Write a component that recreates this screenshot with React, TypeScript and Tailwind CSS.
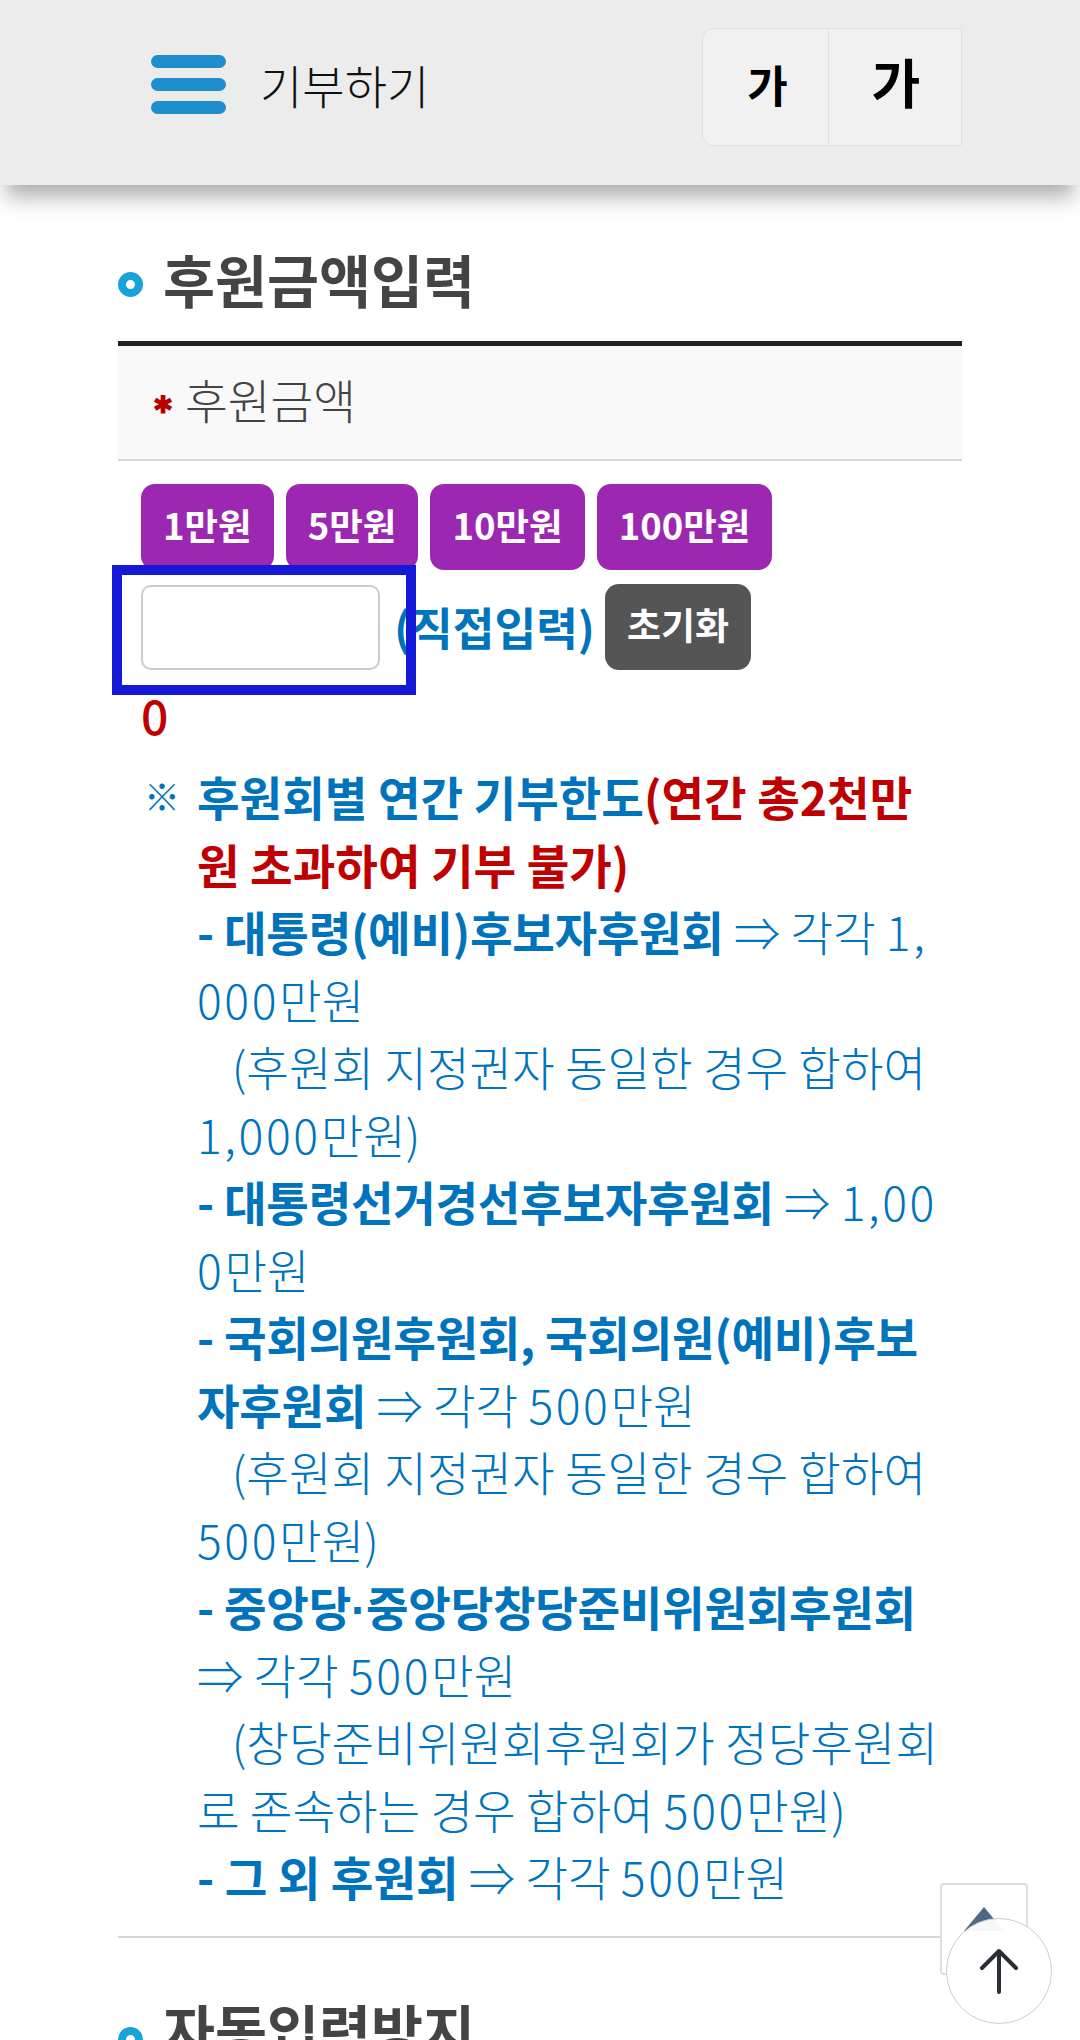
const FONT = "font-['Noto_Sans_CJK_KR','Noto_Sans',sans-serif]";

function Bullet() {
  return <span className="block w-[25px] h-[25px] rounded-full border-[8px] border-[#17a2d8] bg-white shrink-0" />;
}

function Amount({ label }: { label: string }) {
  return (
    <button className="h-[86px] rounded-[14px] bg-[#9c27b0] px-[22px] pb-[4px] text-[36.5px] font-bold text-white">
      {label}
    </button>
  );
}

const B = ({ children }: { children: React.ReactNode }) => <b className="font-bold tracking-[-0.3px]">{children}</b>;
const N = ({ children }: { children: React.ReactNode }) => <span className="tracking-[2.6px]">{children}</span>;
const Indent = () => <span className="ml-[4px]">{"\u00a0\u00a0\u00a0"}</span>;

export default function App() {
  return (
    <div className={`relative h-[2040px] w-[1080px] overflow-hidden bg-white ${FONT}`}>
      <header className="flex h-[185px] items-center justify-between bg-[#ececec] pb-[16px] pl-[151px] pr-[118px] shadow-[0_18px_20px_-6px_rgba(0,0,0,0.32)]">
        <div className="flex items-center gap-[34px]">
          <div className="flex w-[75px] flex-col gap-[10px]">
            <span className="h-[13px] rounded-full bg-[#1e8fcc]" />
            <span className="h-[13px] rounded-full bg-[#1e8fcc]" />
            <span className="h-[13px] rounded-full bg-[#1e8fcc]" />
          </div>
          <span className="mb-[2px] text-[46px] font-light leading-none text-[#111]">기부하기</span>
        </div>
        <div className="mt-[5px] flex h-[118px] w-[260px] rounded-l-[12px] border border-[#dde1e7] bg-[#f1f1f1]">
          <span className="flex w-[126px] items-center justify-center border-r border-[#dde1e7] pb-[6px] pl-[4px] text-[44px] font-bold text-black">가</span>
          <span className="flex flex-1 items-center justify-center pb-[10px] pl-[2px] text-[53px] font-bold text-black">가</span>
        </div>
      </header>

      <main className="px-[118px]">
        <h2 className="mt-[60px] flex h-[66px] items-center gap-[20px] text-[56.5px] font-bold leading-none text-[#444]">
          <span className="mt-[12px]"><Bullet /></span>
          <span>후원금액입력</span>
        </h2>

        <div className="mt-[30px] flex h-[120px] items-center gap-[12px] border-t-[5px] border-b-2 border-[#d6d6d6] border-t-[#222] bg-[#f9f9f9] pl-[35px]">
          <span className="text-[24px] font-bold leading-none text-[#b80000]">✱</span>
          <span className="mb-[8px] text-[46.5px] font-light text-[#444]">후원금액</span>
        </div>

        <div className="relative mt-[23px] px-[23px]">
          <div className="flex gap-[12px]">
            <Amount label="1만원" />
            <Amount label="5만원" />
            <Amount label="10만원" />
            <Amount label="100만원" />
          </div>
          <div className="mt-[14px] flex items-center">
            <input className="h-[85px] w-[239px] rounded-[10px] border-2 border-[#ccc] bg-white" />
            <span className="ml-[14px] text-[45.3px] font-bold leading-none text-[#0073bd]">(직접입력)</span>
            <button className="ml-[10px] h-[86px] w-[146px] rounded-[14px] bg-[#555] pb-[4px] text-[37px] font-bold text-white">초기화</button>
          </div>
          <div className="absolute left-[-6px] top-[81px] h-[130px] w-[304px] border-[10px] border-[#1419d6]" />
          <div className="mt-[14px] text-[48px] font-medium leading-[60px] text-[#c00000]">0</div>

          <div className="mt-[18px] flex whitespace-nowrap text-[46.3px] font-light leading-[67.5px] text-[#0073bd]">
            <span className="w-[56px] shrink-0 pl-[3px] text-[36px]">※</span>
            <div>
              <b className="font-bold">후원회별 연간 기부한도</b><b className="font-bold text-[#c00000]">(연간 총2천만</b><br />
              <b className="font-bold text-[#c00000]">원 초과하여 기부 불가)</b><br />
              <B>- 대통령(예비)후보자후원회</B> ⇒ 각각 <N>1,</N><br />
              <N>000</N>만원<br />
              <Indent />(후원회 지정권자 동일한 경우 합하여<br />
              <N>1,000</N>만원)<br />
              <B>- 대통령선거경선후보자후원회</B> ⇒ <N>1,00</N><br />
              <N>0</N>만원<br />
              <B>- 국회의원후원회, 국회의원(예비)후보</B><br />
              <B>자후원회</B> ⇒ 각각 <N>500</N>만원<br />
              <Indent />(후원회 지정권자 동일한 경우 합하여<br />
              <N>500</N>만원)<br />
              <B>- 중앙당<span className="font-['Liberation_Sans'] leading-none">·</span>중앙당창당준비위원회후원회</B><br />
              ⇒ 각각 <N>500</N>만원<br />
              <Indent />(창당준비위원회후원회가 정당후원회<br />
              로 존속하는 경우 합하여 <N>500</N>만원)<br />
              <b className="font-bold">- 그 외 후원회</b> ⇒ 각각 <N>500</N>만원
            </div>
          </div>
        </div>

        <div className="mt-[26px] border-t-2 border-[#d6d6d6]" />

        <h2 className="mt-[58px] flex h-[66px] items-center gap-[20px] text-[56.5px] font-bold leading-none text-[#444]">
          <span className="mt-[22px]"><Bullet /></span>
          <span>자동입력방지</span>
        </h2>
      </main>

      <div className="absolute left-[940px] top-[1883px] flex h-[92px] w-[88px] items-start justify-center rounded-[4px] border-2 border-[#ddd] bg-white pt-[20px]">
        <svg width="44" height="28" viewBox="0 0 44 28"><path d="M22 2 L42 26 H2 Z" fill="#4d6a85" /></svg>
      </div>
      <div className="absolute left-[946px] top-[1918px] flex h-[106px] w-[106px] items-center justify-center rounded-full border border-[#ccc] bg-white/95">
        <svg width="40" height="46" viewBox="0 0 40 46" fill="none" stroke="#2a2d34" strokeWidth="4" strokeLinecap="round" strokeLinejoin="round">
          <path d="M20 44V3M3 20 20 3l17 17" />
        </svg>
      </div>
    </div>
  );
}
